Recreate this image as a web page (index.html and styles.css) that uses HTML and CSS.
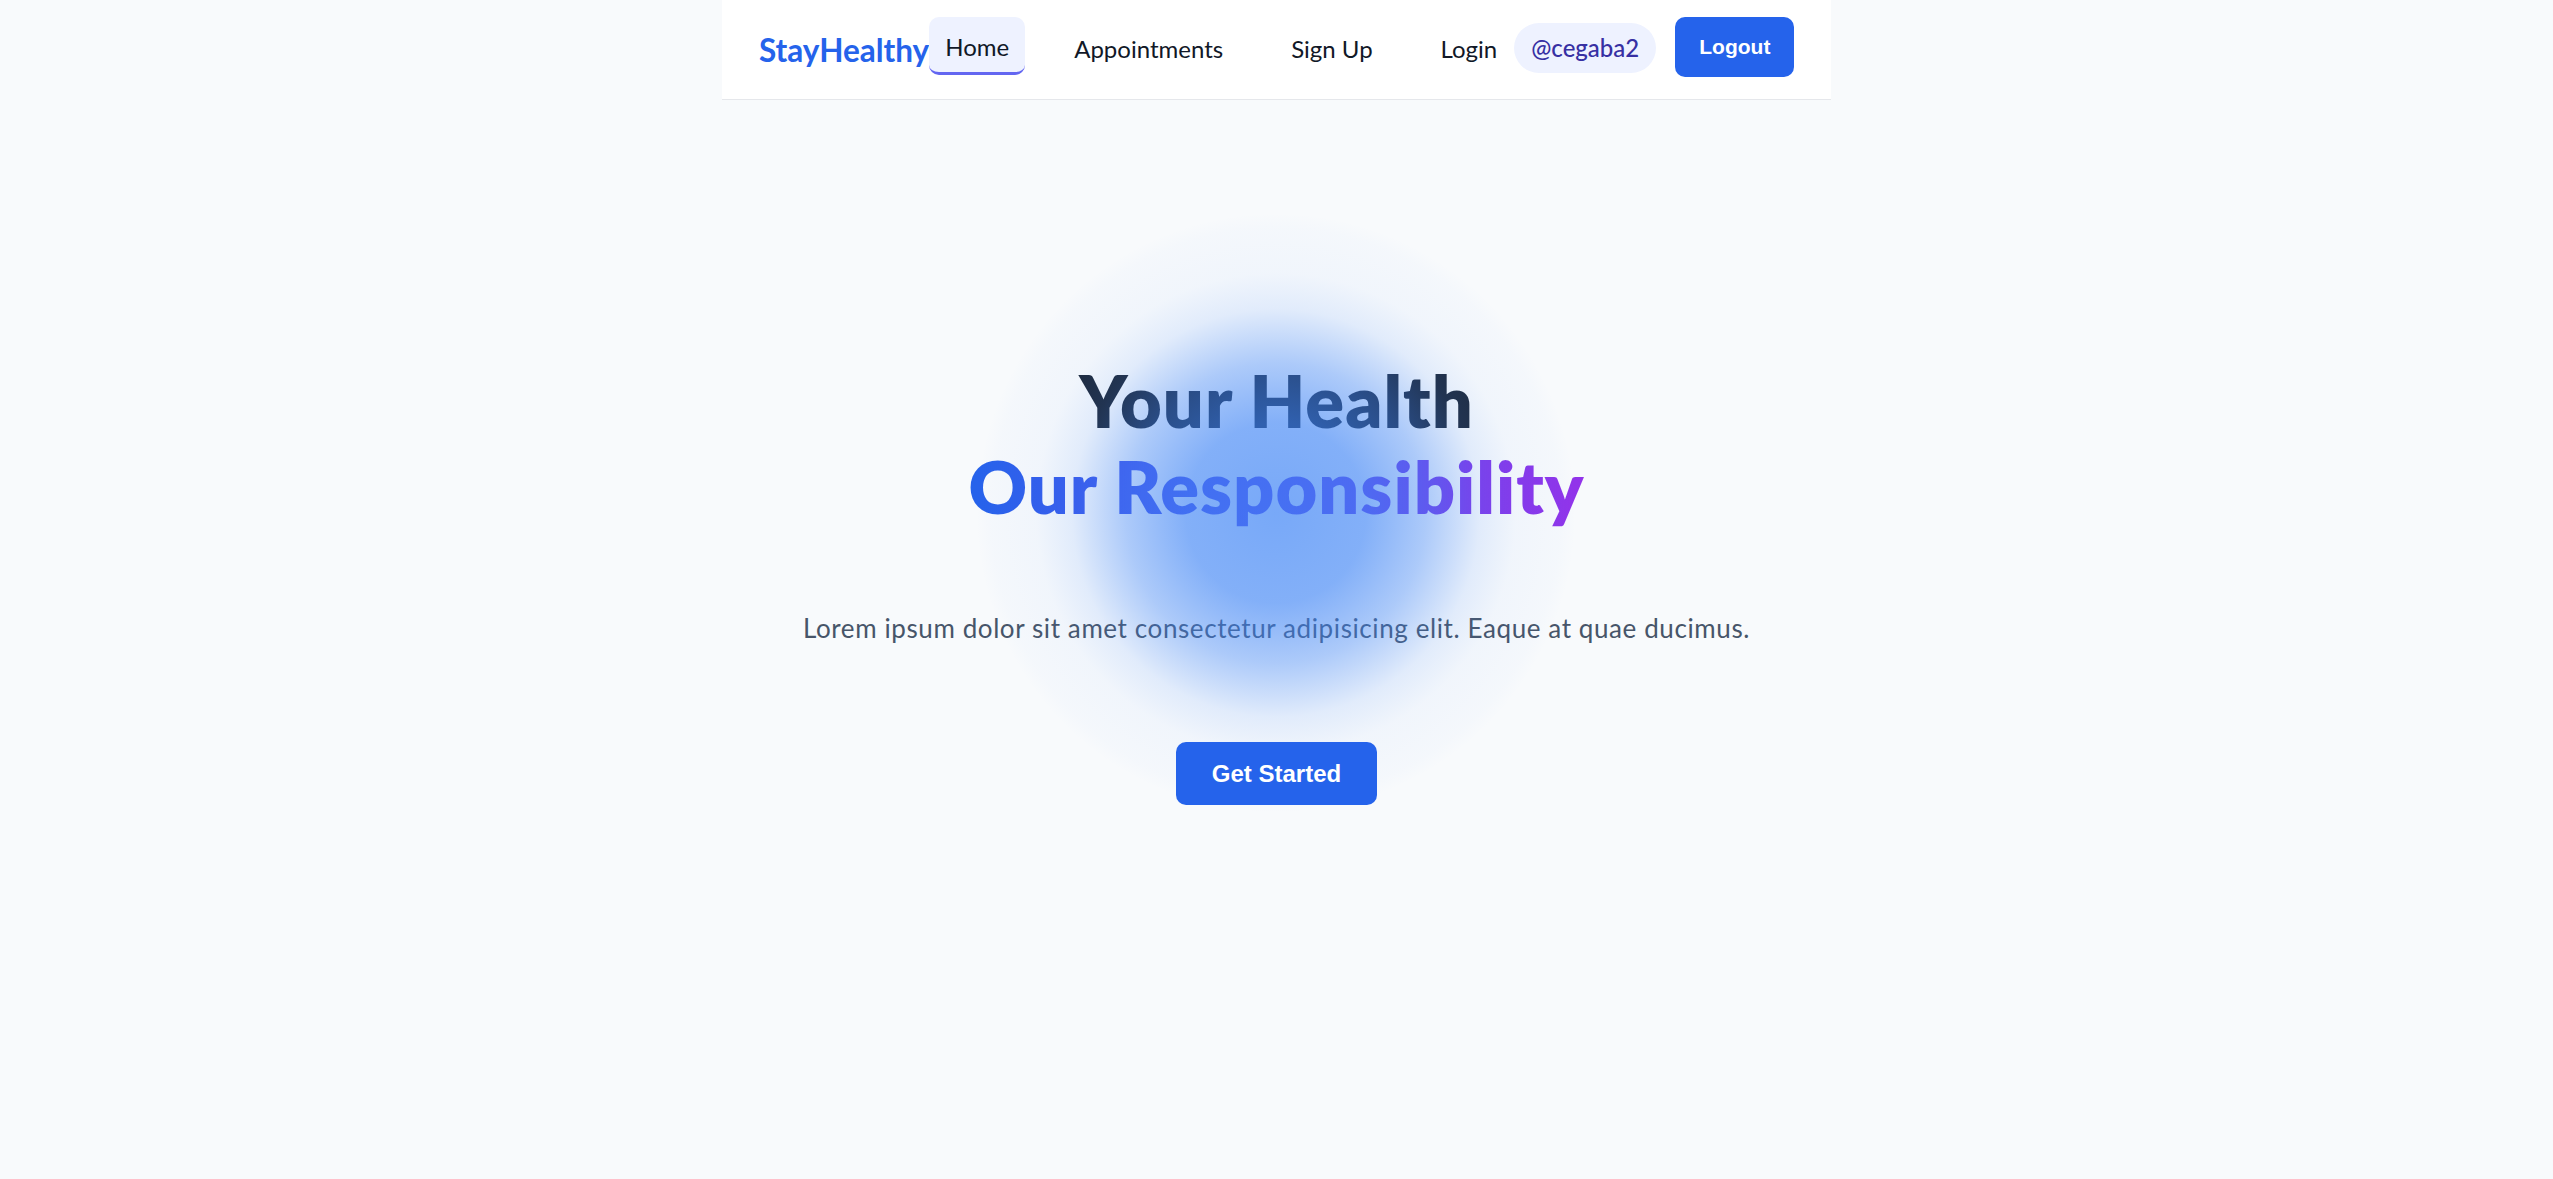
FILE: index.html
```html
<!DOCTYPE html>
<html lang="en">
<head>
<meta charset="utf-8">
<title>StayHealthy</title>
<link rel="stylesheet" href="styles.css">
</head>
<body>
<header class="navbar">
  <a class="logo" href="#">StayHealthy</a>
  <ul class="nav-links">
    <li><a class="nav-link active" href="#">Home</a></li>
    <li><a class="nav-link" href="#">Appointments</a></li>
    <li><a class="nav-link" href="#">Sign Up</a></li>
    <li><a class="nav-link" href="#">Login</a></li>
  </ul>
  <span class="user-pill">@cegaba2</span>
  <button class="btn btn-logout">Logout</button>
</header>
<main class="hero">
  <div class="hero-inner">
    <h1 class="hero-title">
      <span class="line-1">Your Health</span>
      <span class="line-2">Our Responsibility</span>
    </h1>
    <p class="hero-text">Lorem ipsum dolor sit amet consectetur adipisicing elit. Eaque at quae ducimus.</p>
    <div class="blob"></div>
    <button class="btn btn-start">Get Started</button>
  </div>
</main>
</body>
</html>
```
FILE: styles.css
```css
* { box-sizing: border-box; }
html, body { margin: 0; padding: 0; }
body {
  background: #f8fafc;
  font-family: "Lato", "Noto Sans", sans-serif;
  color: #111827;
  min-height: 100vh;
}
.navbar {
  width: 1109px;
  height: 100px;
  margin: 0 auto;
  background: #ffffff;
  border-bottom: 1px solid #e5e7eb;
  display: flex;
  align-items: center;
  padding: 0 30px 0 37px;
  white-space: nowrap;
}
.navbar > * { flex-shrink: 0; }
.logo {
  font-size: 31.5px;
  font-weight: 700;
  color: #2563eb;
  text-decoration: none;
  margin-top: 1px;
}
.nav-links {
  list-style: none;
  margin: 0;
  padding: 0;
  display: flex;
  align-items: center;
  gap: 36px;
}
.nav-links li { flex-shrink: 0; }
.nav-links li:nth-child(2) { margin-left: -3px; }
.nav-link {
  display: block;
  font-size: 24px;
  line-height: 32px;
  color: #111827;
  text-decoration: none;
  padding: 0 16px;
  margin-top: -1px;
}
.nav-link.active {
  background: #eef2ff;
  border-radius: 10px;
  border-bottom: 3px solid #6366f1;
  padding: 14px 16px 9px;
  margin-top: -7px;
}
.user-pill {
  background: #eef2ff;
  color: #3730a3;
  font-size: 24px;
  font-weight: 500;
  line-height: 32px;
  padding: 9px 17px;
  border-radius: 25px;
  margin-top: -4px;
  margin-left: 1px;
}
.btn {
  border: none;
  background: #2563eb;
  color: #ffffff;
  font-family: "Liberation Sans", Arial, sans-serif;
  font-weight: 700;
  cursor: pointer;
}
.btn-logout {
  font-size: 21px;
  line-height: 24px;
  padding: 18px 24px;
  border-radius: 10px;
  margin-left: 19px;
  margin-top: -5px;
}
.hero {
  display: flex;
  justify-content: center;
}
.hero-inner {
  position: relative;
  display: flex;
  flex-direction: column;
  align-items: center;
  padding-top: 257px;
}
.hero-title {
  margin: 0;
  font-size: 72px;
  line-height: 1.2;
  font-weight: 800;
  letter-spacing: 1px;
  text-align: center;
  display: flex;
  flex-direction: column;
  align-items: center;
}
.line-1 { color: #1e293b; }
.line-2 {
  background: linear-gradient(90deg, #2563eb, #9333ea);
  -webkit-background-clip: text;
  background-clip: text;
  color: transparent;
}
.hero-text {
  margin: 79px 0 0;
  font-size: 26px;
  letter-spacing: 0.6px;
  line-height: 1.5;
  color: #475569;
}
.btn-start {
  position: relative;
  z-index: 2;
  margin-top: 94px;
  font-size: 24px;
  line-height: 27px;
  padding: 18px 36px;
  border-radius: 10px;
}
.blob {
  position: absolute;
  left: 50%;
  top: 113px;
  width: 600px;
  height: 600px;
  margin-left: -300px;
  border-radius: 50%;
  pointer-events: none;
  z-index: 1;
  background: radial-gradient(circle closest-side, rgba(59,130,246,0.68) 0%, rgba(59,130,246,0.62) 30%, rgba(59,130,246,0.4) 50%, rgba(59,130,246,0.12) 68%, rgba(59,130,246,0.04) 80%, rgba(59,130,246,0.02) 95%, rgba(59,130,246,0) 100%);
}
```
